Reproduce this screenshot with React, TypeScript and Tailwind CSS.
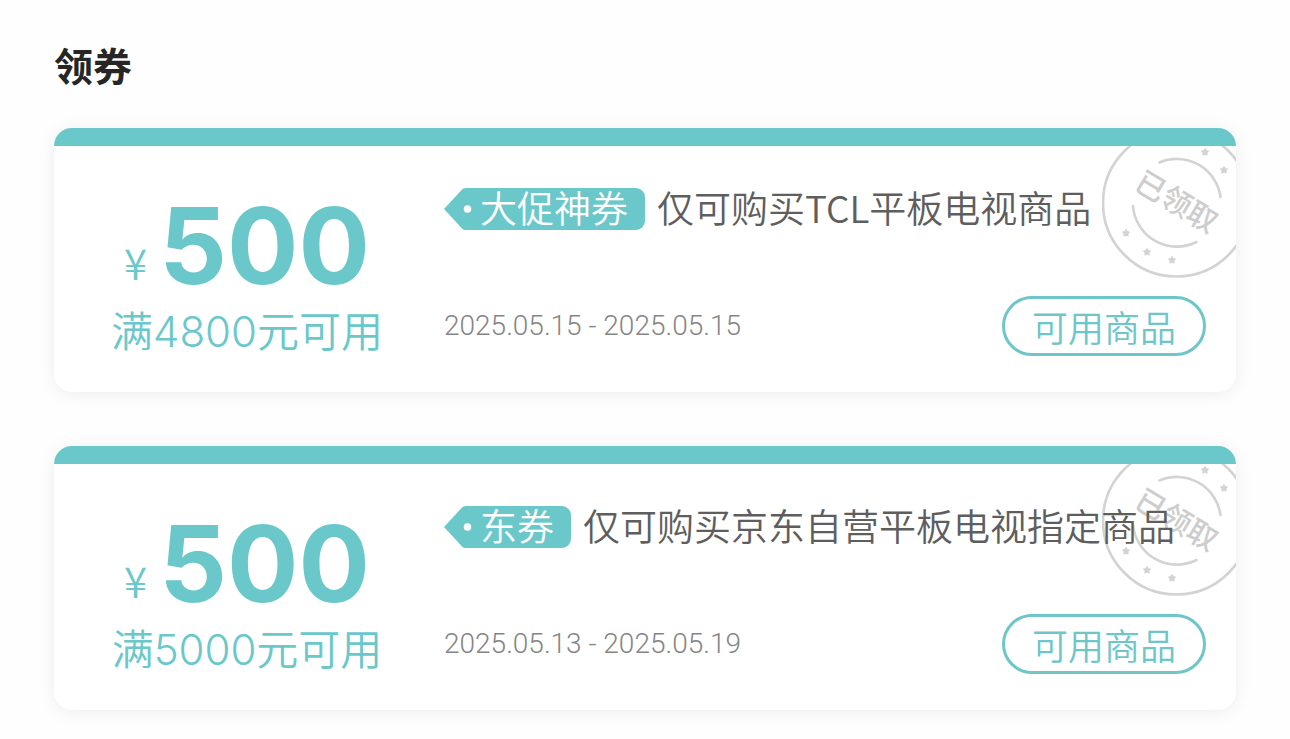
import React from "react";

type Coupon = {
  amount: number;
  condition: string;
  tag: string;
  title: string;
  period: string;
};

const coupons: Coupon[] = [
  {
    amount: 500,
    condition: "满4800元可用",
    tag: "大促神券",
    title: "仅可购买TCL平板电视商品",
    period: "2025.05.15 - 2025.05.15",
  },
  {
    amount: 500,
    condition: "满5000元可用",
    tag: "东券",
    title: "仅可购买京东自营平板电视指定商品",
    period: "2025.05.13 - 2025.05.19",
  },
];

const stars = [
  [103, 24],
  [122, 42],
  [24, 105],
  [45, 124],
  [70, 132],
];

const ClaimedStamp = () => (
  <svg
    viewBox="0 0 150 150"
    className="absolute -top-[18px] -right-4 h-[150px] w-[150px]"
    fill="none"
    stroke="#d3d3d3"
    strokeWidth="2.6"
  >
    <circle cx="74.500" cy="75" r="73.500" />
    <path d="M57.500 34.500A44 44 0 0 1 118.500 69" strokeLinecap="round" />
    <path d="M31 78A44 44 0 0 0 94.500 114" strokeLinecap="round" />
    {stars.map(([x, y]) => (
      <path
        key={`${x}-${y}`}
        transform={`translate(${x} ${y})`}
        d="M0 -3.2L1 -1.2L3.2 -.9L1.6 .7L2 2.9L0 1.8L-2 2.9L-1.6 .7L-3.2 -.9L-1 -1.2Z"
        fill="#d3d3d3"
        strokeWidth="1.4"
        strokeLinejoin="round"
      />
    ))}
    <text
      x="74"
      y="85"
      transform="rotate(31 75 75)"
      textAnchor="middle"
      fill="#cdcdcd"
      stroke="none"
      className="text-[30px] font-medium"
    >
      已领取
    </text>
  </svg>
);

const CouponTag = ({ text }: { text: string }) => (
  <span className="flex h-[42px] shrink-0 text-white">
    <svg viewBox="0 0 36 42" className="h-[42px] w-9">
      <path d="M0 21L18 1.500Q19.500 0 21.500 0H36V42H21.500Q19.500 42 18 40.500Z" fill="#6ac8cb" />
      <circle cx="23.500" cy="21" r="3.800" fill="#fff" />
    </svg>
    <span className="rounded-r-[9px] bg-[#6ac8cb] pr-[17px] text-[37px] leading-[38px] font-[350]">
      {text}
    </span>
  </span>
);

const CouponCard = ({ coupon }: { coupon: Coupon }) => (
  <li className="overflow-hidden rounded-[18px] bg-white shadow-[0_2px_18px_rgba(0,0,0,0.07)]">
    <div className="h-[18px] bg-[#6ac8cb]" />
    <div className="relative flex overflow-hidden">
      <ClaimedStamp />
      <div className="w-[390px] shrink-0 pt-15 pr-1 text-[#6ac8cb]">
        <div className="flex items-end justify-center gap-3">
          <span className="pb-1 text-[42px] leading-10 font-[350]">¥</span>
          <strong className="font-['Inter',sans-serif] text-[106px] leading-20 font-bold">
            {coupon.amount}
          </strong>
        </div>
        <p className="mt-6 text-center font-['Inter','Noto_Sans_CJK_SC',sans-serif] text-[42px] leading-11 font-[350]">
          {coupon.condition}
        </p>
      </div>
      <div className="relative flex min-w-0 flex-1 flex-col justify-between gap-[66px] pt-[42px] pr-[30px] pb-9">
        <h2 className="flex items-center gap-3 whitespace-nowrap">
          <CouponTag text={coupon.tag} />
          <span className="pb-1 text-[37px] leading-[38px] font-[350] text-[#5e5e5e]">
            {coupon.title}
          </span>
        </h2>
        <div className="flex items-center justify-between">
          <time className="font-['Roboto',sans-serif] text-[28px] leading-8 font-[350] text-[#858585]">
            {coupon.period}
          </time>
          <button
            type="button"
            className="h-15 rounded-full border-3 border-[#6ec6c8] px-[27px] text-[36px] leading-[54px] font-[350] text-[#6ec6c8]"
          >
            可用商品
          </button>
        </div>
      </div>
    </div>
  </li>
);

export default function App() {
  return (
    <main className="min-h-screen bg-[#fefefe] px-[54px] pt-[42px] pb-7 font-['Noto_Sans_CJK_SC',sans-serif]">
      <h1 className="text-[39px] leading-11 font-bold text-[#262626]">领券</h1>
      <ul className="mt-[42px] flex flex-col gap-[54px]">
        {coupons.map((coupon, index) => (
          <CouponCard key={index} coupon={coupon} />
        ))}
      </ul>
    </main>
  );
}
